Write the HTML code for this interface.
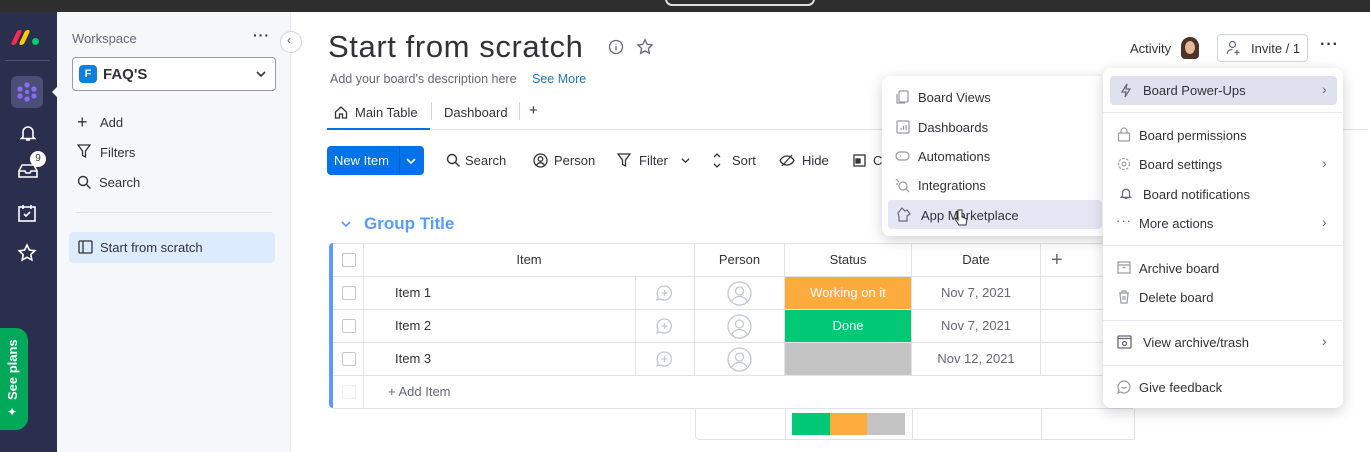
<!DOCTYPE html>
<html><head><meta charset="utf-8"><style>
*{box-sizing:border-box;margin:0;padding:0}
body{width:1370px;height:452px;overflow:hidden;font-family:"Liberation Sans",sans-serif;background:#fff;position:relative;color:#323338}
.a{position:absolute}
.t{position:absolute;white-space:nowrap}
svg{position:absolute}
.cell{position:absolute;border-right:1px solid #e1e3ea;border-bottom:1px solid #e1e3ea;font-size:13px;text-align:center}
</style></head><body>
<div class="a" style="left:0;top:0;width:1370px;height:12px;background:#2e2e2e"></div>
<div class="a" style="left:665px;top:-8px;width:150px;height:14px;border:2px solid #ddd;border-radius:8px"></div>
<!-- nav -->
<div class="a" style="left:0;top:12px;width:57px;height:440px;background:#292f4c"></div>
<div class="a" style="left:14px;top:30px;width:5px;height:15px;background:#f62b54;border-radius:3px;transform:skew(-25deg)"></div>
<div class="a" style="left:22px;top:30px;width:5px;height:15px;background:#ffcb00;border-radius:3px;transform:skew(-25deg)"></div>
<div class="a" style="left:32px;top:38px;width:7px;height:7px;background:#00ca72;border-radius:50%"></div>
<div class="a" style="left:5px;top:60px;width:45px;height:1px;background:#4a5070"></div>
<div class="a" style="left:11px;top:76px;width:32px;height:32px;background:#4b4e77;border-radius:6px"></div>
<div class="a" style="left:52px;top:86px;width:0;height:0;border-top:6px solid transparent;border-bottom:6px solid transparent;border-right:6px solid #f6f7fb"></div>
<svg style="left:15px;top:80px" width="24" height="24" viewBox="0 0 24 24" fill="#8b6cf6"><circle cx="12" cy="5" r="2.6"/><circle cx="12" cy="19" r="2.6"/><circle cx="5" cy="9" r="2.6"/><circle cx="19" cy="9" r="2.6"/><circle cx="5" cy="16" r="2.6"/><circle cx="19" cy="16" r="2.6"/><circle cx="12" cy="12" r="2"/></svg>
<svg style="left:18px;top:123px" width="20" height="20" viewBox="0 0 20 20" fill="none" stroke="#fff" stroke-width="1.6"><path d="M5 14V9a5 5 0 0110 0v5l1.5 1.5h-13z M8 17h4"/></svg>
<svg style="left:17px;top:162px" width="22" height="18" viewBox="0 0 22 18" fill="none" stroke="#fff" stroke-width="1.6"><path d="M2 9l3-6h12l3 6v6H2z M2 9h6l1 2h4l1-2h6"/></svg>
<div class="a" style="left:30px;top:151px;width:16px;height:16px;border-radius:50%;background:#fff;color:#333;font-size:10px;text-align:center;line-height:16px">9</div>
<svg style="left:17px;top:203px" width="20" height="20" viewBox="0 0 20 20" fill="none" stroke="#fff" stroke-width="1.6"><rect x="2" y="4" width="16" height="14"/><path d="M6 2v4M14 2v4M7 11l2 2 4-4"/></svg>
<svg style="left:17px;top:243px" width="20" height="20" viewBox="0 0 20 20" fill="none" stroke="#fff" stroke-width="1.6"><path d="M10 2l2.4 5 5.4.7-4 3.8 1 5.4L10 14.3 5.2 17l1-5.4-4-3.8 5.4-.7z"/></svg>
<div class="a" style="left:0;top:328px;width:28px;height:102px;background:#00a85a;border-radius:0 12px 12px 0"></div>
<div class="t" style="left:5px;top:400px;transform:rotate(-90deg);transform-origin:0 0;color:#fff;font-size:13px;font-weight:bold">See plans</div>
<div class="t" style="left:7px;top:405px;color:#fff;font-size:12px">✦</div>
<!-- sidebar -->
<div class="a" style="left:57px;top:12px;width:234px;height:440px;background:#f6f7fb;border-right:1px solid #e6e9ef"></div>
<div class="t" style="left:72px;top:31px;font-size:13px;color:#676879">Workspace</div>
<div class="t" style="left:253px;top:27px;font-size:14px;color:#323338;letter-spacing:1px;font-weight:bold">···</div>
<div class="a" style="left:280px;top:31px;width:22px;height:22px;border-radius:50%;background:#fff;border:1px solid #d0d4e4"></div>
<div class="t" style="left:287px;top:33px;font-size:12px;color:#676879">‹</div>
<div class="a" style="left:72px;top:57px;width:204px;height:34px;border:1px solid #9699a6;border-radius:4px;background:#fff"></div>
<div class="a" style="left:79px;top:65px;width:18px;height:18px;background:#0d7fdc;border-radius:4px;color:#fff;font-size:11px;font-weight:bold;text-align:center;line-height:18px">F</div>
<div class="t" style="left:103px;top:66px;font-size:15px;font-weight:bold;color:#323338">FAQ'S</div>
<svg style="left:255px;top:69px" width="12" height="10" viewBox="0 0 12 10" fill="none" stroke="#323338" stroke-width="1.6"><path d="M2 3l4 4 4-4"/></svg>
<div class="t" style="left:77px;top:112px;font-size:18px;color:#323338">+</div>
<div class="t" style="left:100px;top:115px;font-size:13px">Add</div>
<svg style="left:77px;top:144px" width="14" height="15" viewBox="0 0 14 15" fill="none" stroke="#323338" stroke-width="1.3"><path d="M1 1h12L8.5 7v6l-3-1.5V7z"/></svg>
<div class="t" style="left:100px;top:145px;font-size:13px">Filters</div>
<svg style="left:77px;top:175px" width="15" height="15" viewBox="0 0 15 15" fill="none" stroke="#323338" stroke-width="1.4"><circle cx="6" cy="6" r="4.5"/><path d="M9.5 9.5l4 4"/></svg>
<div class="t" style="left:99px;top:175px;font-size:13px">Search</div>
<div class="a" style="left:76px;top:212px;width:196px;height:1px;background:#e1e3ea"></div>
<div class="a" style="left:69px;top:232px;width:206px;height:31px;background:#dcebfe;border-radius:4px"></div>
<svg style="left:78px;top:240px" width="15" height="14" viewBox="0 0 15 14" fill="none" stroke="#323338" stroke-width="1.3"><rect x="1" y="1" width="13" height="12" rx="1"/><path d="M5 1v12"/></svg>
<div class="t" style="left:100px;top:240px;font-size:13px">Start from scratch</div>
<!-- main header -->
<div class="t" style="left:328px;top:29px;font-size:31px;letter-spacing:0.6px;color:#323338">Start from scratch</div>
<svg style="left:608px;top:39px" width="16" height="16" viewBox="0 0 16 16" fill="none" stroke="#676879" stroke-width="1.3"><circle cx="8" cy="8" r="6.5"/><path d="M8 7v4.5M8 4.5v1"/></svg>
<svg style="left:636px;top:38px" width="18" height="18" viewBox="0 0 20 20" fill="none" stroke="#676879" stroke-width="1.5"><path d="M10 2l2.4 5 5.4.7-4 3.8 1 5.4L10 14.3 5.2 17l1-5.4-4-3.8 5.4-.7z"/></svg>
<div class="t" style="left:330px;top:72px;font-size:12.5px;color:#676879">Add your board's description here</div>
<div class="t" style="left:532px;top:72px;font-size:12.5px;color:#1f76c2">See More</div>
<svg style="left:334px;top:105px" width="14" height="14" viewBox="0 0 14 14" fill="none" stroke="#323338" stroke-width="1.3"><path d="M1.5 7L7 2l5.5 5v6h-4V9h-3v4h-4z"/></svg>
<div class="t" style="left:355px;top:105px;font-size:13px">Main Table</div>
<div class="a" style="left:431px;top:102px;width:1px;height:18px;background:#d0d4e4"></div>
<div class="t" style="left:444px;top:105px;font-size:13px">Dashboard</div>
<div class="a" style="left:519px;top:102px;width:1px;height:18px;background:#d0d4e4"></div>
<div class="t" style="left:529px;top:102px;font-size:15px">+</div>
<div class="a" style="left:328px;top:129px;width:1040px;height:1px;background:#e1e3ea"></div>
<div class="a" style="left:327px;top:128px;width:103px;height:2px;background:#0073ea"></div>
<!-- toolbar -->
<div class="a" style="left:327px;top:146px;width:97px;height:29px;background:#0073ea;border-radius:4px"></div>
<div class="a" style="left:399px;top:146px;width:1px;height:29px;background:#0060c0"></div>
<div class="t" style="left:334px;top:153px;font-size:13px;color:#fff">New Item</div>
<svg style="left:405px;top:156px" width="12" height="10" viewBox="0 0 12 10" fill="none" stroke="#fff" stroke-width="1.6"><path d="M2 3l4 4 4-4"/></svg>
<svg style="left:446px;top:153px" width="15" height="15" viewBox="0 0 15 15" fill="none" stroke="#323338" stroke-width="1.4"><circle cx="6" cy="6" r="4.5"/><path d="M9.5 9.5l4 4"/></svg>
<div class="t" style="left:465px;top:153px;font-size:13px">Search</div>
<svg style="left:533px;top:153px" width="15" height="15" viewBox="0 0 15 15" fill="none" stroke="#323338" stroke-width="1.3"><circle cx="7.5" cy="7.5" r="6.5"/><circle cx="7.5" cy="6" r="2.3"/><path d="M3.5 12.5c1-2 2.5-2.8 4-2.8s3 .8 4 2.8"/></svg>
<div class="t" style="left:554px;top:153px;font-size:13px">Person</div>
<svg style="left:617px;top:153px" width="14" height="15" viewBox="0 0 14 15" fill="none" stroke="#323338" stroke-width="1.3"><path d="M1 1h12L8.5 7v6l-3-1.5V7z"/></svg>
<div class="t" style="left:639px;top:153px;font-size:13px">Filter</div>
<svg style="left:680px;top:156px" width="11" height="9" viewBox="0 0 12 10" fill="none" stroke="#323338" stroke-width="1.4"><path d="M2 3l4 4 4-4"/></svg>
<svg style="left:711px;top:152px" width="12" height="17" viewBox="0 0 12 17" fill="none" stroke="#323338" stroke-width="1.3"><path d="M3 5l3-3 3 3M3 12l3 3 3-3"/></svg>
<div class="t" style="left:732px;top:153px;font-size:13px">Sort</div>
<svg style="left:779px;top:154px" width="16" height="13" viewBox="0 0 16 13" fill="none" stroke="#323338" stroke-width="1.3"><path d="M1 6.5C3 3 5.5 2 8 2s5 1 7 4.5C13 10 10.5 11 8 11S3 10 1 6.5z"/><path d="M3 12L13 1"/></svg>
<div class="t" style="left:802px;top:153px;font-size:13px">Hide</div>
<svg style="left:853px;top:154px" width="13" height="13" viewBox="0 0 13 13" fill="none" stroke="#323338" stroke-width="1.3"><rect x="1" y="1" width="11" height="11"/><rect x="3" y="5" width="4" height="4" fill="#323338"/></svg>
<div class="t" style="left:873px;top:153px;font-size:13px">C</div>
<!-- group -->
<svg style="left:340px;top:219px" width="12" height="10" viewBox="0 0 12 10" fill="none" stroke="#579bfc" stroke-width="1.6"><path d="M2 3l4 4 4-4"/></svg>
<div class="t" style="left:364px;top:214px;font-size:17px;color:#579bfc;font-weight:bold">Group Title</div>
<!-- table -->
<div class="a" style="left:329px;top:243px;width:4px;height:165px;background:#579bfc;border-radius:4px 0 0 4px"></div>
<div class="a" style="left:333px;top:243px;width:800px;height:1px;background:#e1e3ea"></div>
<div class="cell" style="left:333px;top:244px;width:31px;height:33px"></div>
<div class="cell" style="left:364px;top:244px;width:331px;height:33px;line-height:32px">Item</div>
<div class="cell" style="left:695px;top:244px;width:90px;height:33px;line-height:32px">Person</div>
<div class="cell" style="left:785px;top:244px;width:127px;height:33px;line-height:32px">Status</div>
<div class="cell" style="left:912px;top:244px;width:129px;height:33px;line-height:32px">Date</div>
<div class="cell" style="left:1041px;top:244px;width:92px;height:33px;line-height:32px;text-align:left;padding-left:10px;font-size:20px;color:#676879;border-right:0">+</div>
<!-- row 1 -->
<div class="cell" style="left:333px;top:277px;width:31px;height:33px"></div>
<div class="cell" style="left:364px;top:277px;width:272px;height:33px;line-height:32px;text-align:left;padding-left:31px">Item 1</div>
<div class="cell" style="left:636px;top:277px;width:59px;height:33px"></div>
<div class="cell" style="left:695px;top:277px;width:90px;height:33px"></div>
<div class="cell" style="left:785px;top:277px;width:127px;height:33px;line-height:32px;background:#fdab3d;color:#fff">Working on it</div>
<div class="cell" style="left:912px;top:277px;width:129px;height:33px;line-height:32px;color:#676879">Nov 7, 2021</div>
<div class="cell" style="left:1041px;top:277px;width:92px;height:33px;border-right:0"></div>
<!-- row 2 -->
<div class="cell" style="left:333px;top:310px;width:31px;height:33px"></div>
<div class="cell" style="left:364px;top:310px;width:272px;height:33px;line-height:32px;text-align:left;padding-left:31px">Item 2</div>
<div class="cell" style="left:636px;top:310px;width:59px;height:33px"></div>
<div class="cell" style="left:695px;top:310px;width:90px;height:33px"></div>
<div class="cell" style="left:785px;top:310px;width:127px;height:33px;line-height:32px;background:#00c875;color:#fff">Done</div>
<div class="cell" style="left:912px;top:310px;width:129px;height:33px;line-height:32px;color:#676879">Nov 7, 2021</div>
<div class="cell" style="left:1041px;top:310px;width:92px;height:33px;border-right:0"></div>
<!-- row 3 -->
<div class="cell" style="left:333px;top:343px;width:31px;height:33px"></div>
<div class="cell" style="left:364px;top:343px;width:272px;height:33px;line-height:32px;text-align:left;padding-left:31px">Item 3</div>
<div class="cell" style="left:636px;top:343px;width:59px;height:33px"></div>
<div class="cell" style="left:695px;top:343px;width:90px;height:33px"></div>
<div class="cell" style="left:785px;top:343px;width:127px;height:33px;background:#c4c4c4"></div>
<div class="cell" style="left:912px;top:343px;width:129px;height:33px;line-height:32px;color:#676879">Nov 12, 2021</div>
<div class="cell" style="left:1041px;top:343px;width:92px;height:33px;border-right:0"></div>
<!-- add item -->
<div class="cell" style="left:333px;top:376px;width:31px;height:33px"></div>
<div class="cell" style="left:364px;top:376px;width:769px;height:33px;line-height:32px;text-align:left;padding-left:24px;color:#676879;border-right:0">+ Add Item</div>
<!-- checkboxes -->
<div class="a" style="left:342px;top:253px;width:14px;height:14px;border:1px solid #c3c6d4;border-radius:2px"></div>
<div class="a" style="left:342px;top:286px;width:14px;height:14px;border:1px solid #c3c6d4;border-radius:2px"></div>
<div class="a" style="left:342px;top:319px;width:14px;height:14px;border:1px solid #c3c6d4;border-radius:2px"></div>
<div class="a" style="left:342px;top:352px;width:14px;height:14px;border:1px solid #c3c6d4;border-radius:2px"></div>
<div class="a" style="left:342px;top:385px;width:14px;height:14px;border:1px solid #eceef3;border-radius:2px"></div>
<!-- comment & person icons -->
<svg style="left:655px;top:284px" width="19" height="19" viewBox="0 0 19 19" fill="none" stroke="#c3c6d4" stroke-width="1.3"><path d="M9.5 2a7 7 0 11-4 12.8L2 16l1.2-3.3A7 7 0 019.5 2zM9.5 6v6M6.5 9h6"/></svg>
<svg style="left:655px;top:317px" width="19" height="19" viewBox="0 0 19 19" fill="none" stroke="#c3c6d4" stroke-width="1.3"><path d="M9.5 2a7 7 0 11-4 12.8L2 16l1.2-3.3A7 7 0 019.5 2zM9.5 6v6M6.5 9h6"/></svg>
<svg style="left:655px;top:350px" width="19" height="19" viewBox="0 0 19 19" fill="none" stroke="#c3c6d4" stroke-width="1.3"><path d="M9.5 2a7 7 0 11-4 12.8L2 16l1.2-3.3A7 7 0 019.5 2zM9.5 6v6M6.5 9h6"/></svg>
<svg style="left:727px;top:281px" width="25" height="25" viewBox="0 0 25 25" fill="none" stroke="#c3c6d4" stroke-width="1.3"><circle cx="12.5" cy="12.5" r="11.5"/><circle cx="12.5" cy="10" r="4"/><path d="M5 20c2-3.5 4.5-4.5 7.5-4.5s5.5 1 7.5 4.5"/></svg>
<svg style="left:727px;top:314px" width="25" height="25" viewBox="0 0 25 25" fill="none" stroke="#c3c6d4" stroke-width="1.3"><circle cx="12.5" cy="12.5" r="11.5"/><circle cx="12.5" cy="10" r="4"/><path d="M5 20c2-3.5 4.5-4.5 7.5-4.5s5.5 1 7.5 4.5"/></svg>
<svg style="left:727px;top:347px" width="25" height="25" viewBox="0 0 25 25" fill="none" stroke="#c3c6d4" stroke-width="1.3"><circle cx="12.5" cy="12.5" r="11.5"/><circle cx="12.5" cy="10" r="4"/><path d="M5 20c2-3.5 4.5-4.5 7.5-4.5s5.5 1 7.5 4.5"/></svg>
<!-- summary -->
<div class="a" style="left:695px;top:409px;width:440px;height:31px;border:1px solid #e1e3ea;border-top:0;border-radius:0 0 0 4px"></div>
<div class="a" style="left:785px;top:409px;width:1px;height:31px;background:#e1e3ea"></div>
<div class="a" style="left:912px;top:409px;width:1px;height:31px;background:#e1e3ea"></div>
<div class="a" style="left:1041px;top:409px;width:1px;height:31px;background:#e1e3ea"></div>
<div class="a" style="left:792px;top:413px;width:38px;height:22px;background:#00c875"></div>
<div class="a" style="left:830px;top:413px;width:37px;height:22px;background:#fdab3d"></div>
<div class="a" style="left:867px;top:413px;width:38px;height:22px;background:#c4c4c4"></div>
<!-- top right -->
<div class="t" style="left:1130px;top:41px;font-size:13px">Activity</div>
<div class="a" style="left:1181px;top:37px;width:18px;height:22px;border-radius:9px 9px 4px 4px;background:#4a3428"></div>
<div class="a" style="left:1185px;top:41px;width:10px;height:13px;border-radius:50%;background:#e7b898"></div>
<div class="a" style="left:1217px;top:34px;width:91px;height:28px;border:1px solid #d0d4e4;border-radius:4px"></div>
<svg style="left:1226px;top:40px" width="16" height="16" viewBox="0 0 16 16" fill="none" stroke="#676879" stroke-width="1.2"><circle cx="6.5" cy="4.5" r="3"/><path d="M1 14c.5-3 2.5-4.5 5.5-4.5M11 10v5M8.5 12.5h5"/></svg>
<div class="t" style="left:1251px;top:41px;font-size:13px">Invite / 1</div>
<div class="t" style="left:1320px;top:36px;font-size:16px;font-weight:bold;letter-spacing:1px">···</div>
<!-- left submenu -->
<div class="a" style="left:882px;top:76px;width:227px;height:160px;background:#fff;border-radius:8px;box-shadow:0 4px 14px rgba(0,0,0,.18)"></div>
<div class="a" style="left:888px;top:200px;width:214px;height:29px;background:#e4e6f3;border-radius:4px"></div>
<svg style="left:896px;top:90px" width="14" height="14" viewBox="0 0 14 14" fill="none" stroke="#9699a6" stroke-width="1.2"><rect x="3" y="1" width="9" height="11" rx="1"/><path d="M1 4v9h8"/></svg>
<div class="t" style="left:918px;top:90px;font-size:13px">Board Views</div>
<svg style="left:896px;top:120px" width="14" height="14" viewBox="0 0 14 14" fill="none" stroke="#9699a6" stroke-width="1.2"><rect x="1" y="1" width="12" height="12" rx="1"/><path d="M5 10V8M7.5 10V6M10 10V5"/></svg>
<div class="t" style="left:918px;top:120px;font-size:13px">Dashboards</div>
<svg style="left:895px;top:150px" width="15" height="12" viewBox="0 0 15 12" fill="none" stroke="#9699a6" stroke-width="1.2"><rect x="1" y="2" width="13" height="8" rx="4"/><path d="M5 6h1"/></svg>
<div class="t" style="left:918px;top:149px;font-size:13px">Automations</div>
<svg style="left:895px;top:178px" width="15" height="15" viewBox="0 0 15 15" fill="none" stroke="#9699a6" stroke-width="1.2"><circle cx="8" cy="8" r="4"/><path d="M1 1l3 3M11 11l3 3M3 6l-2 0"/></svg>
<div class="t" style="left:918px;top:178px;font-size:13px">Integrations</div>
<svg style="left:896px;top:206px" width="16" height="16" viewBox="0 0 16 16" fill="none" stroke="#676879" stroke-width="1.2"><path d="M2 7l4-5 3 3 2-1 3 4-3 2v5H3v-4l-1-4z"/></svg>
<div class="t" style="left:921px;top:208px;font-size:13px">App Marketplace</div>
<svg style="left:954px;top:209px" width="14" height="17" viewBox="0 0 14 17"><path d="M4 1v10l-2-2-1 1 4 6h7l1-6-5-2V1z" fill="#fff" stroke="#333" stroke-width="1"/></svg>
<!-- right menu -->
<div class="a" style="left:1103px;top:68px;width:240px;height:340px;background:#fff;border-radius:8px;box-shadow:0 4px 14px rgba(0,0,0,.18)"></div>
<div class="a" style="left:1110px;top:76px;width:227px;height:29px;background:#dfe1ef;border-radius:4px"></div>
<svg style="left:1120px;top:83px" width="12" height="15" viewBox="0 0 12 15" fill="none" stroke="#676879" stroke-width="1.2"><path d="M7 1L2 9h4l-1 5 5-8H6z"/></svg>
<div class="t" style="left:1143px;top:83px;font-size:13px">Board Power-Ups</div>
<div class="t" style="left:1322px;top:81px;font-size:14px;color:#676879">›</div>
<div class="a" style="left:1103px;top:112px;width:240px;height:1px;background:#e6e9ef"></div>
<svg style="left:1117px;top:127px" width="14" height="15" viewBox="0 0 14 15" fill="none" stroke="#9699a6" stroke-width="1.2"><rect x="1.5" y="6" width="11" height="8" rx="1"/><path d="M4 6V4a3 3 0 016 0v2"/></svg>
<div class="t" style="left:1139px;top:128px;font-size:13px">Board permissions</div>
<svg style="left:1117px;top:157px" width="14" height="14" viewBox="0 0 14 14" fill="none" stroke="#9699a6" stroke-width="1.2"><circle cx="7" cy="7" r="2"/><circle cx="7" cy="7" r="5.5" stroke-dasharray="2.5 1.5"/></svg>
<div class="t" style="left:1139px;top:157px;font-size:13px">Board settings</div>
<div class="t" style="left:1322px;top:155px;font-size:14px;color:#676879">›</div>
<svg style="left:1119px;top:186px" width="14" height="15" viewBox="0 0 20 20" fill="none" stroke="#676879" stroke-width="1.8"><path d="M5 14V9a5 5 0 0110 0v5l1.5 1.5h-13z M8 17h4"/></svg>
<div class="t" style="left:1143px;top:187px;font-size:13px">Board notifications</div>
<div class="t" style="left:1116px;top:213px;font-size:13px;color:#676879;letter-spacing:1px">···</div>
<div class="t" style="left:1139px;top:216px;font-size:13px">More actions</div>
<div class="t" style="left:1322px;top:214px;font-size:14px;color:#676879">›</div>
<div class="a" style="left:1103px;top:245px;width:240px;height:1px;background:#e6e9ef"></div>
<svg style="left:1117px;top:261px" width="14" height="13" viewBox="0 0 14 13" fill="none" stroke="#9699a6" stroke-width="1.2"><rect x="1" y="1" width="12" height="11"/><path d="M1 4h12M5.5 6.5h3"/></svg>
<div class="t" style="left:1139px;top:261px;font-size:13px">Archive board</div>
<svg style="left:1118px;top:290px" width="12" height="14" viewBox="0 0 12 14" fill="none" stroke="#9699a6" stroke-width="1.2"><path d="M1 3h10M4 3V1h4v2M2 3l1 10h6l1-10M5 6v4M7 6v4"/></svg>
<div class="t" style="left:1139px;top:290px;font-size:13px">Delete board</div>
<div class="a" style="left:1103px;top:320px;width:240px;height:1px;background:#e6e9ef"></div>
<svg style="left:1117px;top:334px" width="15" height="15" viewBox="0 0 15 15" fill="none" stroke="#676879" stroke-width="1.3"><rect x="1" y="2" width="13" height="12" rx="1"/><path d="M1 4.5h13"/><circle cx="7.5" cy="9.5" r="2"/></svg>
<div class="t" style="left:1143px;top:335px;font-size:13px">View archive/trash</div>
<div class="t" style="left:1322px;top:333px;font-size:14px;color:#676879">›</div>
<div class="a" style="left:1103px;top:365px;width:240px;height:1px;background:#e6e9ef"></div>
<svg style="left:1117px;top:380px" width="14" height="14" viewBox="0 0 14 14" fill="none" stroke="#9699a6" stroke-width="1.2"><path d="M7 1a6 6 0 11-3.5 10.9L1 13l1-2.8A6 6 0 017 1z"/><path d="M4.5 7c1 1.5 4 1.5 5 0"/></svg>
<div class="t" style="left:1139px;top:380px;font-size:13px">Give feedback</div>
</body></html>
